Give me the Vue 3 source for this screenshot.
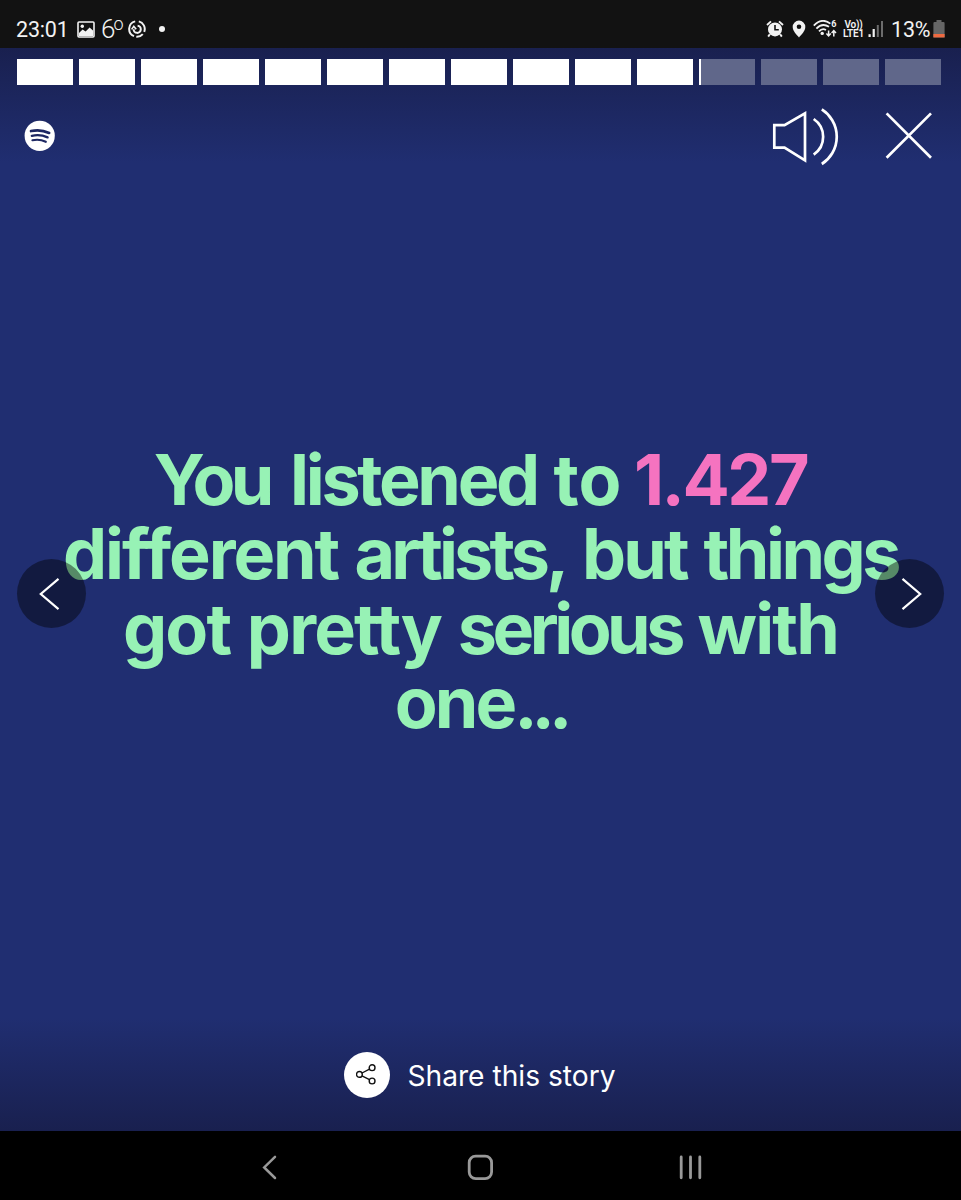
<template>
  <div class="screen">
    <!-- status bar -->
    <div class="status-bar">
      <div class="status-left">
        <span class="clock">23:01</span>
        <svg class="icon-image" width="18" height="17" viewBox="0 0 18 17">
          <rect x="1" y="1" width="16" height="15" rx="1" fill="none" stroke="#f2f2f2" stroke-width="1.6" />
          <circle cx="5.3" cy="5.2" r="1.7" fill="#f2f2f2" />
          <path d="M2 12 L5.6 8.6 L8.6 10.6 L12.6 6.4 L16 9.6 V15 H2 Z" fill="#f2f2f2" />
        </svg>
        <span class="temp">6<span class="degree">o</span></span>
        <svg class="icon-sync" width="18" height="18" viewBox="0 0 18 18" fill="none" stroke="#f2f2f2">
          <path d="M7.2 1.4 A7.8 7.8 0 0 0 6 16.2" stroke-width="2" />
          <path d="M10.8 1.4 A7.8 7.8 0 0 1 16.2 11.8" stroke-width="2" />
          <path d="M14.8 14.1 A7.8 7.8 0 0 1 8.3 16.8" stroke-width="2" />
          <path d="M5.6 9.2 A3.6 3.6 0 1 0 9.6 5.7" stroke-width="2" />
          <path d="M3.6 9.4 L5.8 6.4 L8.2 9.2" stroke-width="1.6" />
        </svg>
        <span class="dot"></span>
      </div>
      <div class="status-right">
        <svg width="18" height="18" viewBox="0 0 18 18">
          <circle cx="9" cy="9.4" r="7" fill="#f2f2f2" />
          <path d="M1 5 L5 1.4 M17 5 L13 1.4 M3.8 14.2 L2.2 16.6 M14.2 14.2 L15.8 16.6" stroke="#f2f2f2" stroke-width="1.9" fill="none" />
          <path d="M9 5 V9.8 H12.8" stroke="#121212" stroke-width="1.6" fill="none" />
        </svg>
        <svg class="icon-pin" width="14" height="18" viewBox="0 0 14 18">
          <path d="M7 0.6 A6.3 6.3 0 0 0 0.7 6.9 C0.7 11 4.6 14.4 7 17.4 C9.4 14.4 13.3 11 13.3 6.9 A6.3 6.3 0 0 0 7 0.6 Z M7 4.5 A2.3 2.3 0 1 1 7 9.1 A2.3 2.3 0 1 1 7 4.5 Z" fill="#f2f2f2" fill-rule="evenodd" />
        </svg>
        <svg class="icon-wifi" width="24" height="18" viewBox="0 0 24 18" fill="none" stroke="#f2f2f2">
          <path d="M0.8 5.6 Q9 -2.8 17.4 3.6" stroke-width="1.8" />
          <path d="M3.4 8.6 Q9.2 2.4 16 6.8" stroke-width="1.8" />
          <path d="M6 11.4 Q9.2 7.8 13 10" stroke-width="1.8" />
          <circle cx="9.2" cy="13.4" r="1.7" fill="#f2f2f2" stroke="none" />
          <path d="M15.6 10.4 V15.8 M13.4 13.6 L15.6 16 L17.8 13.6" stroke-width="1.5" />
          <path d="M20.8 16.4 V11 M18.6 13 L20.8 10.6 L23 13" stroke-width="1.5" />
          <text x="18.2" y="7.4" fill="#f2f2f2" stroke="none" font-family="Roboto, sans-serif" font-weight="700" font-size="9">6</text>
        </svg>
        <div class="volte">
          <span>Vo))</span>
          <span>LTE1</span>
        </div>
        <svg class="icon-signal" width="16" height="18" viewBox="0 0 16 18">
          <rect x="0.5" y="14.2" width="2.2" height="2.8" fill="#f2f2f2" />
          <rect x="4.6" y="9" width="2.2" height="8" fill="#f2f2f2" />
          <rect x="8.8" y="5" width="2" height="12" fill="#6c6c6c" />
          <rect x="13" y="1" width="2" height="16" fill="#6c6c6c" />
        </svg>
        <span class="percent">13%</span>
        <svg class="icon-battery" width="12" height="18" viewBox="0 0 12 18">
          <path d="M3.5 0 H8.5 V2 H10.5 Q11.6 2 11.6 3.2 V17.4 H0.4 V3.2 Q0.4 2 1.5 2 H3.5 Z" fill="#666" />
          <rect x="0.4" y="14" width="11.2" height="3.4" fill="#ee6a41" />
        </svg>
      </div>
    </div>

    <!-- story -->
    <div class="story">
      <div class="segments">
        <div v-for="(value, index) in segments" :key="index" class="segment">
          <div class="segment-fill" :style="{ width: value + '%' }"></div>
        </div>
      </div>

      <div class="toolbar">
        <svg class="logo" width="32" height="32" viewBox="0 0 32 32">
          <circle cx="15.7" cy="15.8" r="15.1" fill="#fff" />
          <g fill="none" stroke="#1d2762" stroke-linecap="round">
            <path d="M7 11.1 Q16.5 8.9 25.2 13" stroke-width="2.6" />
            <path d="M7.8 15.8 Q16 13.8 23.6 17.4" stroke-width="2.3" />
            <path d="M8.4 20.3 Q15.4 18.7 21.8 21.8" stroke-width="2.1" />
          </g>
        </svg>
        <div class="actions">
          <svg width="68" height="60" viewBox="0 0 68 60" fill="none" stroke="#fff" stroke-width="2.7">
            <path d="M3.3 19.2 H13.5 L34 7.4 V54.4 L13.5 41.6 H3.3 Z" />
            <path d="M42.7 13 A21.5 21.5 0 0 1 42.7 48.6" />
            <path d="M50.8 3.4 A32.4 32.4 0 0 1 50.8 58" />
          </svg>
          <svg width="48" height="48" viewBox="0 0 48 48" fill="none" stroke="#fff" stroke-width="2.7">
            <path d="M1.6 1.4 L46 45.8 M46 1.4 L1.6 45.8" />
          </svg>
        </div>
      </div>

      <h1 class="headline">
        <span class="line line-1"><span>You</span> <span>listened</span> <span>to</span> <em>1.427</em></span>
        <span class="line line-2"><span>different</span> <span>artists,</span> <span>but</span> <span>things</span></span>
        <span class="line line-3"><span>got</span> <span>pretty</span> <span>serious</span> <span>with</span></span>
        <span class="line line-4">one<span>...</span></span>
      </h1>

      <div class="share">
        <div class="share-icon">
          <svg width="22" height="22" viewBox="0 0 22 22" fill="none" stroke="#111" stroke-width="1.4">
            <circle cx="3.4" cy="10.4" r="2.9" />
            <circle cx="16.1" cy="3.7" r="2.9" />
            <circle cx="16.1" cy="17" r="2.9" />
            <path d="M6 9 L13.5 5.1 M6 11.8 L13.5 15.6" />
          </svg>
        </div>
        <span class="share-text">Share this story</span>
      </div>

      <button class="arrow arrow-prev">
        <svg width="69" height="69" viewBox="0 0 69 69">
          <path d="M41.5 19.9 L23.8 35 L41.5 50.1" fill="none" stroke="#fff" stroke-width="2.2" />
        </svg>
      </button>
      <button class="arrow arrow-next">
        <svg width="69" height="69" viewBox="0 0 69 69">
          <path d="M27.5 19.9 L45.2 35 L27.5 50.1" fill="none" stroke="#fff" stroke-width="2.2" />
        </svg>
      </button>
    </div>

    <!-- android navigation -->
    <div class="nav-bar">
      <svg width="26" height="26" viewBox="0 0 26 26">
        <path d="M18 2.8 L7.2 13.4 L18 24" fill="none" stroke="#999" stroke-width="2.5" stroke-linecap="round" />
      </svg>
      <svg width="26" height="26" viewBox="0 0 26 26">
        <rect x="2.2" y="2.2" width="22.4" height="22.4" rx="6.5" fill="none" stroke="#999" stroke-width="2.8" />
      </svg>
      <svg width="26" height="26" viewBox="0 0 26 26">
        <path d="M4.2 3 V23.8 M13.5 3 V23.8 M22.8 3 V23.8" stroke="#999" stroke-width="2.8" stroke-linecap="round" />
      </svg>
    </div>
  </div>
</template>

<script setup>
import { ref } from 'vue';

// progress of every story, in percent
const segments = ref([100, 100, 100, 100, 100, 100, 100, 100, 100, 100, 100, 3, 0, 0, 0]);
</script>

<style>
body {
  margin: 0;
  background-color: #000;
}
</style>

<style scoped>
.screen {
  display: flex;
  flex-direction: column;
  width: 961px;
  height: 1200px;
  overflow: hidden;
  font-family: Inter, "Liberation Sans", sans-serif;
}

svg {
  display: block;
  flex: none;
}

/* status bar */
.status-bar {
  display: flex;
  justify-content: space-between;
  box-sizing: border-box;
  height: 48px;
  padding: 10px 16px 0 16px;
  background-color: #121212;
  color: #f2f2f2;
  font-family: Roboto, sans-serif;
}

.status-left,
.status-right {
  display: flex;
  align-items: center;
}

.clock,
.percent {
  font-size: 21.5px;
  line-height: 24px;
  padding-top: 2px;
}

.clock {
  width: 61px;
  letter-spacing: -0.2px;
}

.temp {
  display: flex;
  width: 27px;
  margin-left: 6px;
  font-size: 26px;
  font-weight: 300;
  line-height: 24px;
  letter-spacing: -2px;
}

.degree {
  margin-top: -5px;
  font-size: 18px;
}

.dot {
  width: 6px;
  height: 6px;
  margin-left: 13px;
  border-radius: 50%;
  background-color: #f2f2f2;
}

.icon-pin {
  margin-left: 8px;
}

.icon-wifi {
  margin-left: 7px;
}

.volte {
  display: flex;
  flex-direction: column;
  align-items: center;
  width: 23px;
  margin-left: 5px;
  font-size: 10px;
  font-weight: 600;
  line-height: 9.5px;
  letter-spacing: -0.2px;
}

.icon-signal {
  margin-left: 3px;
}

.percent {
  width: 42px;
  margin-left: 7px;
  letter-spacing: -0.2px;
}

/* story */
.story {
  position: relative;
  display: flex;
  flex-direction: column;
  height: 1083px;
  background: linear-gradient(#19204f 0, #202e71 115px, #202e71 970px, #19204f 1083px);
}

.segments {
  display: flex;
  gap: 6px;
  padding: 11px 20px 0 17px;
}

.segment {
  flex: 1;
  height: 26px;
  background-color: #60678a;
}

.segment-fill {
  height: 100%;
  background-color: #fff;
}

.toolbar {
  display: flex;
  align-items: center;
  justify-content: space-between;
  height: 60px;
  padding: 21px 28px 0 24px;
}

.actions {
  display: flex;
  align-items: center;
  gap: 46px;
}

.headline {
  margin: 277px 0 0;
  color: #97f2b5;
  font-size: 70px;
  font-weight: 700;
  line-height: 74.4px;
  text-align: center;
}

.headline em {
  color: #f573c0;
  font-style: normal;
  letter-spacing: -2.5px;
}

.line {
  display: block;
  white-space: nowrap;
}

.line-1 {
  word-spacing: -4px;
}

.line-1 span:nth-child(1) {
  margin-right: 8px;
  letter-spacing: -4.8px;
}

.line-1 span:nth-child(2) {
  margin-right: 4px;
  letter-spacing: -3.3px;
}

.line-2 {
  word-spacing: 0;
}

.line-2 span:nth-child(1) {
  letter-spacing: -2.1px;
}

.line-2 span:nth-child(2) {
  letter-spacing: -3.9px;
}

.line-2 span:nth-child(3) {
  letter-spacing: -2.8px;
}

.line-2 span:nth-child(4) {
  letter-spacing: -3.5px;
}

.line-3 {
  word-spacing: 0;
}

.line-3 span {
  letter-spacing: -1.8px;
}

.line-3 span:nth-child(3) {
  letter-spacing: -4.5px;
}

.line-4 {
  letter-spacing: -2.9px;
}

.line-4 span {
  letter-spacing: -6px;
}

.share {
  display: flex;
  align-items: center;
  justify-content: center;
  gap: 17px;
  margin-top: auto;
  padding: 0 1px 33px 0;
}

.share-icon {
  display: flex;
  align-items: center;
  justify-content: center;
  width: 46px;
  height: 46px;
  border-radius: 50%;
  background-color: #fff;
}

.share-text {
  padding-top: 2px;
  color: #fff;
  font-size: 28.2px;
  line-height: 36px;
}

/* prev / next buttons lie over the headline */
.arrow {
  position: absolute;
  top: 511px;
  width: 69px;
  height: 69px;
  padding: 0;
  border: none;
  border-radius: 50%;
  background-color: rgba(0, 0, 0, 0.43);
}

.arrow-prev {
  left: 17px;
}

.arrow-next {
  right: 17px;
}

/* navigation */
.nav-bar {
  display: flex;
  align-items: center;
  justify-content: center;
  gap: 184px;
  height: 69px;
  padding: 3px 2px 0 0;
  box-sizing: border-box;
  background-color: #000;
}
</style>
